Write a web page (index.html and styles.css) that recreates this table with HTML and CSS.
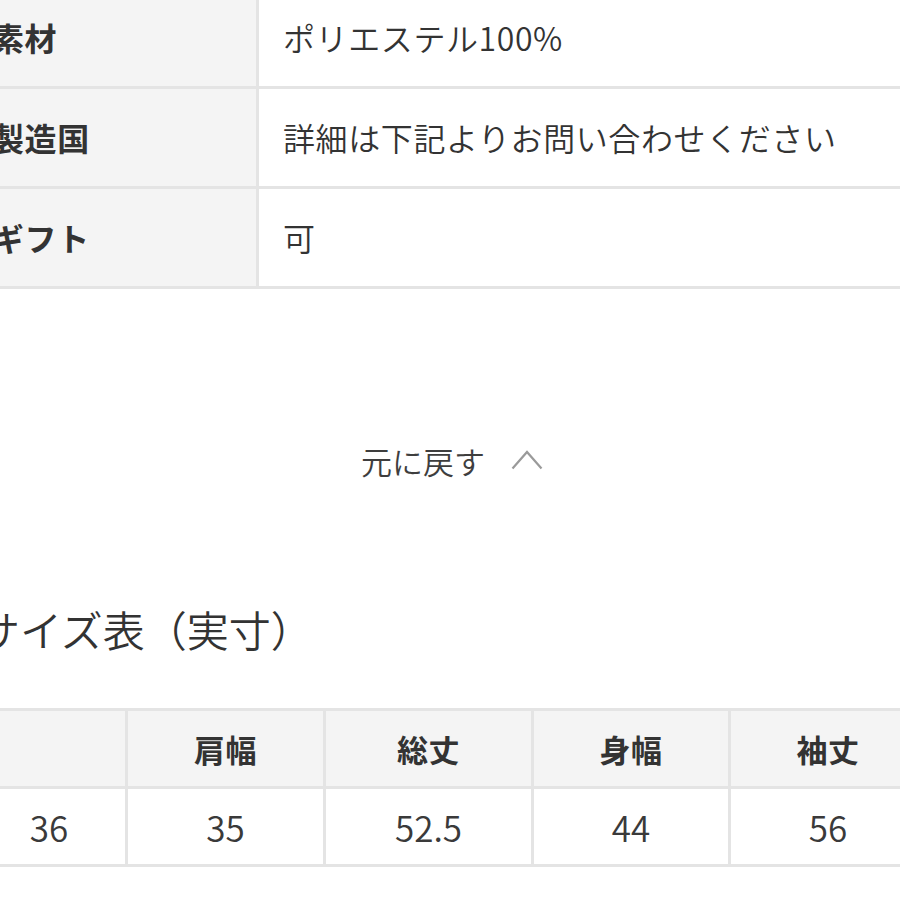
FILE: index.html
```html
<!DOCTYPE html>
<html lang="ja">
<head>
<meta charset="utf-8">
<link rel="stylesheet" href="styles.css">
</head>
<body>
<div class="page">
  <table class="spec">
    <tr><th>素材</th><td>ポリエステル100%</td></tr>
    <tr><th>製造国</th><td>詳細は下記よりお問い合わせください</td></tr>
    <tr><th>ギフト</th><td>可</td></tr>
  </table>

  <div class="back">
    <span class="back-label">元に戻す</span>
    <svg class="chevron" width="32" height="20" viewBox="0 0 32 20"><polyline points="1.5,18.5 16,2 30.5,18.5" fill="none" stroke="#9a9a9a" stroke-width="2.2"/></svg>
  </div>

  <h2 class="size-title">サイズ表（実寸）</h2>

  <table class="size">
    <colgroup>
      <col class="c1"><col class="c2"><col class="c3"><col class="c4"><col class="c5">
    </colgroup>
    <tr class="head"><th></th><th>肩幅</th><th>総丈</th><th>身幅</th><th>袖丈</th></tr>
    <tr><td>36</td><td>35</td><td>52.5</td><td>44</td><td>56</td></tr>
  </table>
</div>
</body>
</html>
```

FILE: styles.css
```css
html, body {
  margin: 0;
  padding: 0;
  background: #fff;
  overflow: hidden;
}
body {
  font-family: "Noto Sans CJK JP", "Noto Sans", sans-serif;
  color: #333;
}
.page {
  width: 1000px;
  margin-left: -32px;
  margin-top: -11px;
}
.spec {
  border-collapse: separate;
  border-spacing: 0;
  width: 100%;
}
.spec th, .spec td {
  font-size: 32px;
  line-height: 97px;
  padding: 0 0 0 24px;
  border-bottom: 3px solid #e4e4e4;
  text-align: left;
  vertical-align: middle;
  white-space: nowrap;
}
.spec th {
  width: 264px;
  background: #f4f4f4;
  border-right: 3px solid #e4e4e4;
  font-weight: 700;
  letter-spacing: 0.6px;
}
.spec td {
  font-weight: 350;
  letter-spacing: 0.6px;
}
.back {
  margin-top: 152px;
  height: 40px;
  display: flex;
  align-items: center;
  justify-content: center;
  gap: 26px;
  width: 900px;
  box-sizing: border-box;
  padding-left: 68px;
}
.back-label {
  font-size: 31px;
  line-height: 40px;
  font-weight: 350;
  color: #3e3e3e;
}
.chevron {
  display: block;
  margin-top: -2px;
}
.size-title {
  margin: 118px 0 0 0;
  padding-left: 10px;
  font-size: 42px;
  line-height: 60px;
  font-weight: 350;
  color: #333;
}
.size {
  margin-top: 49px;
  margin-left: 5px;
  border-collapse: separate;
  border-spacing: 0;
  table-layout: fixed;
  width: 955px;
  border-top: 3px solid #e4e4e4;
}
.size col.c1 { width: 155px; }
.size col.c2 { width: 198px; }
.size col.c3 { width: 208px; }
.size col.c4 { width: 197px; }
.size col.c5 { width: 197px; }
.size th, .size td {
  padding: 0;
  text-align: center;
  line-height: 75px;
  border-bottom: 3px solid #e4e4e4;
  border-right: 3px solid #e4e4e4;
}
.size th {
  background: #f4f4f4;
  font-size: 31px;
  font-weight: 700;
  letter-spacing: 0.5px;
}
.size td {
  font-size: 35px;
  font-weight: 350;
  color: #3a3a3a;
}
```
